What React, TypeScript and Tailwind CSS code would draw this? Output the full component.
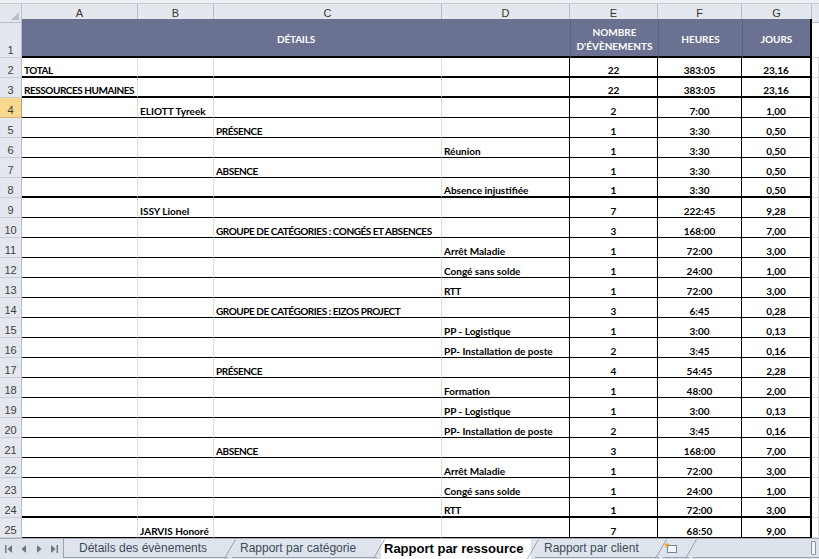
const cols = ["A", "B", "C", "D", "E", "F", "G"];

type Row = {
  n: number;
  col: 0 | 1 | 2 | 3;
  label: string;
  e: string;
  f: string;
  g: string;
  thick?: boolean;
};

const rows: Row[] = [
  { n: 2, col: 0, label: "TOTAL", e: "22", f: "383:05", g: "23,16", thick: true },
  { n: 3, col: 0, label: "RESSOURCES HUMAINES", e: "22", f: "383:05", g: "23,16", thick: true },
  { n: 4, col: 1, label: "ELIOTT Tyreek", e: "2", f: "7:00", g: "1,00" },
  { n: 5, col: 2, label: "PRÉSENCE", e: "1", f: "3:30", g: "0,50" },
  { n: 6, col: 3, label: "Réunion", e: "1", f: "3:30", g: "0,50" },
  { n: 7, col: 2, label: "ABSENCE", e: "1", f: "3:30", g: "0,50" },
  { n: 8, col: 3, label: "Absence injustifiée", e: "1", f: "3:30", g: "0,50", thick: true },
  { n: 9, col: 1, label: "ISSY Lionel", e: "7", f: "222:45", g: "9,28" },
  { n: 10, col: 2, label: "GROUPE DE CATÉGORIES : CONGÉS ET ABSENCES", e: "3", f: "168:00", g: "7,00" },
  { n: 11, col: 3, label: "Arrêt Maladie", e: "1", f: "72:00", g: "3,00" },
  { n: 12, col: 3, label: "Congé sans solde", e: "1", f: "24:00", g: "1,00" },
  { n: 13, col: 3, label: "RTT", e: "1", f: "72:00", g: "3,00" },
  { n: 14, col: 2, label: "GROUPE DE CATÉGORIES : EIZOS PROJECT", e: "3", f: "6:45", g: "0,28" },
  { n: 15, col: 3, label: "PP - Logistique", e: "1", f: "3:00", g: "0,13" },
  { n: 16, col: 3, label: "PP- Installation de poste", e: "2", f: "3:45", g: "0,16" },
  { n: 17, col: 2, label: "PRÉSENCE", e: "4", f: "54:45", g: "2,28" },
  { n: 18, col: 3, label: "Formation", e: "1", f: "48:00", g: "2,00" },
  { n: 19, col: 3, label: "PP - Logistique", e: "1", f: "3:00", g: "0,13" },
  { n: 20, col: 3, label: "PP- Installation de poste", e: "2", f: "3:45", g: "0,16" },
  { n: 21, col: 2, label: "ABSENCE", e: "3", f: "168:00", g: "7,00" },
  { n: 22, col: 3, label: "Arrêt Maladie", e: "1", f: "72:00", g: "3,00" },
  { n: 23, col: 3, label: "Congé sans solde", e: "1", f: "24:00", g: "1,00" },
  { n: 24, col: 3, label: "RTT", e: "1", f: "72:00", g: "3,00", thick: true },
  { n: 25, col: 1, label: "JARVIS Honoré", e: "7", f: "68:50", g: "9,00" },
];

const grid = "grid grid-cols-[22px_116px_76px_228px_128px_88px_84px_70px_1fr]";
const cellText = "font-bold text-[10px] leading-[10px] text-black";

function DataRow({ r }: { r: Row }) {
  const line = r.thick ? "border-b-2 border-b-black" : "border-b border-b-black";
  const txt = (i: number) => (r.col === i ? r.label : "");
  const caps = r.label === r.label.toUpperCase();
  const selected = r.n === 4;
  return (
    <div className={`${grid} h-[20px]`}>
      <div
        className={`flex items-end justify-center pb-[1px] border-r border-b text-[11px] leading-[11px] ${
          selected
            ? "bg-[#f9d98f] border-r-[#c2a35c] border-b-[#d9b66a] text-[#3b3b3b]"
            : "bg-[#e4e8ee] border-r-[#b7bec8] border-b-[#c9ced6] text-[#3d3d3d]"
        } font-['Liberation_Sans',sans-serif]`}
      >
        {r.n}
      </div>
      {[0, 1, 2, 3].map((i) => (
        <div
          key={i}
          className={`relative border-r ${i === 3 ? "border-r-black" : "border-r-[#dadcdd]"} ${line}`}
        >
          {txt(i) && (
            <span
              className={`absolute z-10 bottom-[1px] left-[2px] whitespace-nowrap ${cellText} ${
                caps ? "tracking-[-0.45px]" : ""
              }`}
            >
              {txt(i)}
            </span>
          )}
        </div>
      ))}
      <div className={`flex items-end justify-center pb-[1px] border-r border-r-black ${line} ${cellText}`}>{r.e}</div>
      <div className={`flex items-end justify-center pb-[1px] border-r border-r-black ${line} ${cellText}`}>{r.f}</div>
      <div className={`flex items-end justify-center pb-[1px] border-r-2 border-r-black ${line} ${cellText}`}>{r.g}</div>
      <div className="border-b border-r border-[#dadcdd]" />
    </div>
  );
}

function NavArrows() {
  return (
    <div className="flex items-center w-[63px] pl-[5px] gap-[7px]">
      <svg width="8" height="8" viewBox="0 0 8 8">
        <rect x="0" y="0" width="1.4" height="8" fill="#6f747c" />
        <path d="M7 0 L2.5 4 L7 8 Z" fill="#6f747c" />
      </svg>
      <svg width="8" height="8" viewBox="0 0 8 8">
        <path d="M6 0 L1.5 4 L6 8 Z" fill="#6f747c" />
      </svg>
      <svg width="8" height="8" viewBox="0 0 8 8">
        <path d="M2 0 L6.5 4 L2 8 Z" fill="#6f747c" />
      </svg>
      <svg width="8" height="8" viewBox="0 0 8 8">
        <path d="M1 0 L5.5 4 L1 8 Z" fill="#6f747c" />
        <rect x="6.6" y="0" width="1.4" height="8" fill="#6f747c" />
      </svg>
    </div>
  );
}

function Slant() {
  return (
    <svg width="12" height="20" viewBox="0 0 12 20" className="shrink-0 -mx-[4px] relative z-10">
      <path d="M0.5 19.5 L11.5 0.5" stroke="#9aa3ae" strokeWidth="1" fill="none" />
    </svg>
  );
}

function Tabs() {
  return (
    <div className="flex h-[21px] bg-[#dde3ea] border-t border-t-[#a7b0bb] font-['Liberation_Sans',sans-serif] text-[12px]">
      <NavArrows />
      <div className="flex items-center w-[165px] h-[19px] pl-[15px] bg-[#dde4ec] border-l border-l-[#9aa3ae] border-b border-b-[#9aa3ae] text-[#3f4a57] whitespace-nowrap">
        Détails des évènements
      </div>
      <Slant />
      <div className="flex items-center w-[145px] h-[19px] pl-[8px] bg-[#dde4ec] border-b border-b-[#9aa3ae] text-[#3f4a57] whitespace-nowrap">
        Rapport par catégorie
      </div>
      <Slant />
      <div className="flex items-center w-[150px] h-[20px] pl-[3px] bg-white text-black font-bold text-[13px] whitespace-nowrap">
        Rapport par ressource
      </div>
      <Slant />
      <div className="flex items-center w-[124px] h-[19px] pl-[9px] bg-[#dde4ec] border-b border-b-[#9aa3ae] text-[#3f4a57] whitespace-nowrap">
        Rapport par client
      </div>
      <Slant />
      <div className="flex items-center w-[26px] h-[19px] pl-[1px] bg-[#dde4ec] border-b border-b-[#9aa3ae]">
        <svg width="14" height="12" viewBox="0 0 14 12">
          <rect x="3.5" y="3.5" width="9" height="7" fill="#f4f7fb" stroke="#6e88a8" />
          <path d="M3 0 L3.8 2.2 L6 2.2 L4.2 3.5 L5 5.8 L3 4.4 L1 5.8 L1.8 3.5 L0 2.2 L2.2 2.2 Z" fill="#f0a020" />
        </svg>
      </div>
      <Slant />
      <div className="flex-1 h-[19px] border-b border-b-[#9aa3ae] flex items-center justify-end pr-[3px]">
        <div className="w-[5px] h-[14px] border border-[#8a929c] bg-[#f3f5f8] rounded-[1px]" />
      </div>
    </div>
  );
}

export default function App() {
  return (
    <div className="w-[819px] h-[559px] overflow-hidden bg-white font-['Lato','Liberation_Sans',sans-serif] text-black">
      <div className="h-[4px] bg-[#eef0f3] border-b border-b-[#c4cad2]" />
      <div className={`${grid} h-[15px] text-[11px] text-[#333] font-['Liberation_Sans',sans-serif]`}>
        <div className="relative bg-[#e4e8ee] border-r border-b border-[#b7bec8]">
          <svg width="8" height="8" viewBox="0 0 8 8" className="absolute right-[2px] bottom-[2px]">
            <path d="M8 0 L8 8 L0 8 Z" fill="#b9bfc7" />
          </svg>
        </div>
        {cols.map((c) => (
          <div key={c} className="flex items-center justify-center pt-[1px] bg-[#e4e8ee] border-r border-b border-[#b7bec8]">
            {c}
          </div>
        ))}
        <div className="bg-[#e4e8ee] border-b border-[#b7bec8]" />
      </div>
      <div className={`${grid} h-[39px]`}>
        <div className="flex items-end justify-center pb-[1px] bg-[#e4e8ee] border-r border-b border-r-[#b7bec8] border-b-[#c9ced6] text-[11px] leading-[11px] text-[#3d3d3d] font-['Liberation_Sans',sans-serif]">
          1
        </div>
        <div className="col-span-4 flex items-center justify-center pt-[3px] bg-[#6a7191] border-b-2 border-b-black text-white font-bold text-[10px] tracking-[-0.2px]">
          DÉTAILS
        </div>
        <div className="flex flex-col items-center justify-center pt-[2px] bg-[#6a7191] border-l border-l-[#5b6180] border-b-2 border-b-black text-white font-bold text-[10px] leading-[14px] text-center">
          <span>NOMBRE</span>
          <span>D'ÉVÈNEMENTS</span>
        </div>
        <div className="flex items-center justify-center pt-[3px] bg-[#6a7191] border-l border-l-[#5b6180] border-b-2 border-b-black text-white font-bold text-[10px]">
          HEURES
        </div>
        <div className="flex items-center justify-center pt-[3px] bg-[#6a7191] border-l border-l-[#5b6180] border-r-2 border-r-black border-b-2 border-b-black text-white font-bold text-[10px]">
          JOURS
        </div>
        <div className="border-b border-[#dadcdd]" />
      </div>
      {rows.map((r) => (
        <DataRow key={r.n} r={r} />
      ))}
      <Tabs />
    </div>
  );
}
